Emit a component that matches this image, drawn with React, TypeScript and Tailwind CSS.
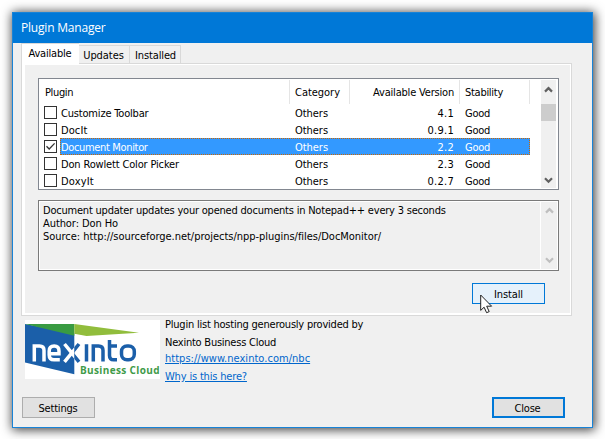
interface Plugin {
  name: string;
  version: string;
  spacing: string;
  checked?: boolean;
}

const plugins: Plugin[] = [
  { name: "Customize Toolbar", version: "4.1", spacing: "tracking-[-0.18px]" },
  { name: "DocIt", version: "0.9.1", spacing: "tracking-[0.1px]" },
  { name: "Document Monitor", version: "2.2", spacing: "tracking-[-0.34px]", checked: true },
  { name: "Don Rowlett Color Picker", version: "2.3", spacing: "tracking-[-0.16px]" },
  { name: "DoxyIt", version: "0.2.7", spacing: "tracking-[0.15px]" },
];

function Chevron({ down = false, color }: { down?: boolean; color: string }) {
  return (
    <svg width="9" height="7" viewBox="0 0 9 7" className="block" fill="none" stroke={color} strokeWidth="2.2">
      <path d={down ? "M1 1.2 4.5 4.7 8 1.2" : "M1 5.6 4.5 2.1 8 5.6"} />
    </svg>
  );
}

function Row({ plugin }: { plugin: Plugin }) {
  const selected = plugin.checked;
  return (
    <div className="flex h-[17px] items-center pl-[5px]">
      <div className="mr-[3px] flex h-[13px] w-[13px] shrink-0 items-center justify-center border border-[#333] bg-white">
        {selected && (
          <svg width="11" height="11" viewBox="0 0 11 11" fill="none" stroke="#333" strokeWidth="1.3">
            <path d="M1.5 5.2 4.2 8 9.6 2.4" />
          </svg>
        )}
      </div>
      <div
        className={
          "flex h-[17px] w-[470px] items-center border border-dotted pt-[2px] leading-[13px] " +
          (selected ? "border-[#cc6600] bg-[#3399ff] text-white" : "border-transparent")
        }
      >
        <span className={"w-[234px] " + plugin.spacing}>{plugin.name}</span>
        <span className="w-[70px] tracking-[-0.04px]">Others</span>
        <span className="w-[89px] text-right tracking-[0.25px]">{plugin.version}</span>
        <span className="ml-[11px] tracking-[-0.27px]">Good</span>
      </div>
    </div>
  );
}

function NexintoLogo() {
  return (
    <svg width="135" height="59" viewBox="0 0 135 59" className="block shrink-0 bg-white">
      <defs>
        <clipPath id="letter-left">
          <path d="M0 0H49.3V59H0Z" />
        </clipPath>
        <clipPath id="letter-right">
          <path d="M49.3 0H135V59H49.3Z" />
        </clipPath>
      </defs>
      <path d="M0 4 49.3 13V54.3L0 42.5Z" fill="#1b5fa9" />
      <path d="M0 4H49.3V15.7Z" fill="#399b42" />
      <path d="M49.3 4 114 12.7 61.5 16 49.3 13.8Z" fill="#91bd3c" />
      <g fill="none" strokeWidth="3.5">
        <g stroke="#fff">
          <path d="M9.3 41.5V26H14.5Q19 26 19 30.5V41.5" />
          <path d="M24.5 33.8H34V31Q34 26 29.2 26Q24.2 26 24.2 31V35Q24.2 39.8 29 39.8H34.8" />
          <path clipPath="url(#letter-left)" d="M39.5 24 54 41.8M54 24 39.5 41.8" />
        </g>
        <g stroke="#1b5fa9">
          <path clipPath="url(#letter-right)" d="M39.5 24 54 41.8M54 24 39.5 41.8" />
          <path d="M61.5 24.2V41.5M68.3 41.5V26H73.5Q78 26 78 30.5V41.5" />
          <path d="M84.5 20V35.5Q84.5 39.8 88.7 39.8H92M84.5 26H92" />
          <rect x="96.5" y="26" width="12.8" height="13.8" rx="5.5" />
        </g>
      </g>
      <text
        x="55"
        y="54.2"
        textLength="79.5"
        className="font-['Open_Sans',sans-serif] text-[10px] font-bold"
        fill="#419b49"
      >
        Business Cloud
      </text>
    </svg>
  );
}

export default function App() {
  return (
    <div className="h-[439px] w-[605px] overflow-hidden bg-white pl-3 pt-3 font-['DejaVu_Sans_Condensed','DejaVu_Sans',sans-serif] text-[11px] leading-[13px] text-black">
      <div className="flex h-[416px] w-[581px] flex-col border border-[#1883d7] bg-[#f0f0f0] whitespace-nowrap shadow-[1px_1px_10px_1px_rgba(0,0,0,0.75)]">
        <div className="flex h-[30px] shrink-0 items-center bg-[#0078d7] pb-px pl-2 font-['Open_Sans',sans-serif] text-[12px] tracking-[-0.2px] text-white">
          Plugin Manager
        </div>

        <div className="flex h-[20px] shrink-0 items-end pl-2">
          <div className="z-10 -mb-px flex h-[21px] w-[58px] justify-center border-l border-t border-[#d9d9d9] bg-white pr-px pt-[3px] tracking-[-0.19px]">
            Available
          </div>
          <div className="flex h-[18px] w-[51px] justify-center border-r border-t border-[#d9d9d9] pr-px pt-[3px] tracking-[-0.07px]">
            Updates
          </div>
          <div className="flex h-[18px] w-[51px] justify-center border-r border-t border-[#d9d9d9] pl-px pt-[3px] tracking-[-0.13px]">
            Installed
          </div>
        </div>

        <div className="ml-2 flex h-[253px] w-[551px] shrink-0 flex-col border border-[#d9d9d9] bg-white pb-[2px] pl-[3px] pr-px pt-px">
          <div className="flex-1 bg-[#f0f0f0] pl-[13px] pt-[13px]">
            <div className="flex h-[112px] w-[521px] justify-between border border-[#828790] bg-white py-px pr-[2px]">
              <div>
                <div className="flex h-[24px] items-center leading-[13px]">
                  <span className="h-6 w-[251px] border-r border-[#e5e5e5] pl-[6px] pt-[6px] tracking-[-0.36px]">Plugin</span>
                  <span className="h-6 w-[60px] border-r border-[#e5e5e5] pl-[5px] pt-[6px] tracking-[-0.03px]">Category</span>
                  <span className="h-6 w-[110px] border-r border-[#e5e5e5] pr-[5px] pt-[6px] text-right tracking-[-0.19px]">Available Version</span>
                  <span className="h-6 w-[70px] border-r border-[#e5e5e5] pl-[5px] pt-[6px] tracking-[-0.28px]">Stability</span>
                </div>
                {plugins.map((p) => (
                  <Row key={p.name} plugin={p} />
                ))}
              </div>
              <div className="flex w-[15px] flex-col items-center bg-[#f0f0f0]">
                <div className="flex h-[24px] items-center pb-[5px]">
                  <Chevron color="#606060" />
                </div>
                <div className="h-[17px] w-[15px] bg-[#cdcdcd]" />
                <div className="mt-auto pb-1">
                  <Chevron down color="#606060" />
                </div>
              </div>
            </div>

            <div className="mt-[10px] flex h-[71px] w-[521px] border border-[#7a7a7a] bg-white p-px">
              <div className="flex-1 bg-[#f0f0f0] pl-[3px] pt-[2px]">
                <div className="tracking-[-0.21px]">
                  Document updater updates your opened documents in Notepad++ every 3 seconds
                </div>
                <div className="tracking-[-0.08px]">Author: Don Ho</div>
                <div className="tracking-[-0.03px]">
                  Source: http://sourceforge.net/projects/npp-plugins/files/DocMonitor/
                </div>
              </div>
              <div className="ml-px flex w-[16px] flex-col items-center justify-between bg-[#f0f0f0] py-[5px]">
                <Chevron color="#bfbfbf" />
                <Chevron down color="#bfbfbf" />
              </div>
            </div>

            <div className="relative ml-[434px] mt-3 flex h-[21px] w-[73px] items-center justify-center border border-[#0078d7] bg-[#e5f1fb] pt-px tracking-[-0.11px]">
              Install
              <svg className="absolute left-[7px] top-[10px]" width="13" height="20" viewBox="0 0 13 20">
                <path
                  d="M.7 1V16.4L4.1 13.2 6.6 18.7 9.2 17.6 6.7 12.2H11.6Z"
                  fill="#fff"
                  stroke="#222"
                  strokeWidth="1"
                />
              </svg>
            </div>
          </div>
        </div>

        <div className="mt-1 flex shrink-0 pl-3">
          <NexintoLogo />
          <div className="ml-[5px] h-[70px] -mt-[3px]">
            <div className="mt-px h-[18px] tracking-[-0.22px]">Plugin list hosting generously provided by</div>
            <div className="h-[16px] tracking-[-0.24px]">Nexinto Business Cloud</div>
            <div className="h-[18px] text-[#0066cc] underline tracking-[0.03px]">https://www.nexinto.com/nbc</div>
            <div className="text-[#0066cc] underline tracking-[-0.17px]">Why is this here?</div>
          </div>
        </div>

        <div className="mt-auto flex justify-between pb-[9px] pl-[9px] pr-[27px]">
          <div className="flex h-[21px] w-[73px] items-center justify-center border border-[#adadad] bg-[#e1e1e1] pr-px pt-px tracking-[-0.2px]">
            Settings
          </div>
          <div className="flex h-[21px] w-[73px] items-center justify-center border-2 border-[#0078d7] bg-[#e1e1e1] pr-[2px] pt-px tracking-[-0.19px]">
            Close
          </div>
        </div>
      </div>
    </div>
  );
}
